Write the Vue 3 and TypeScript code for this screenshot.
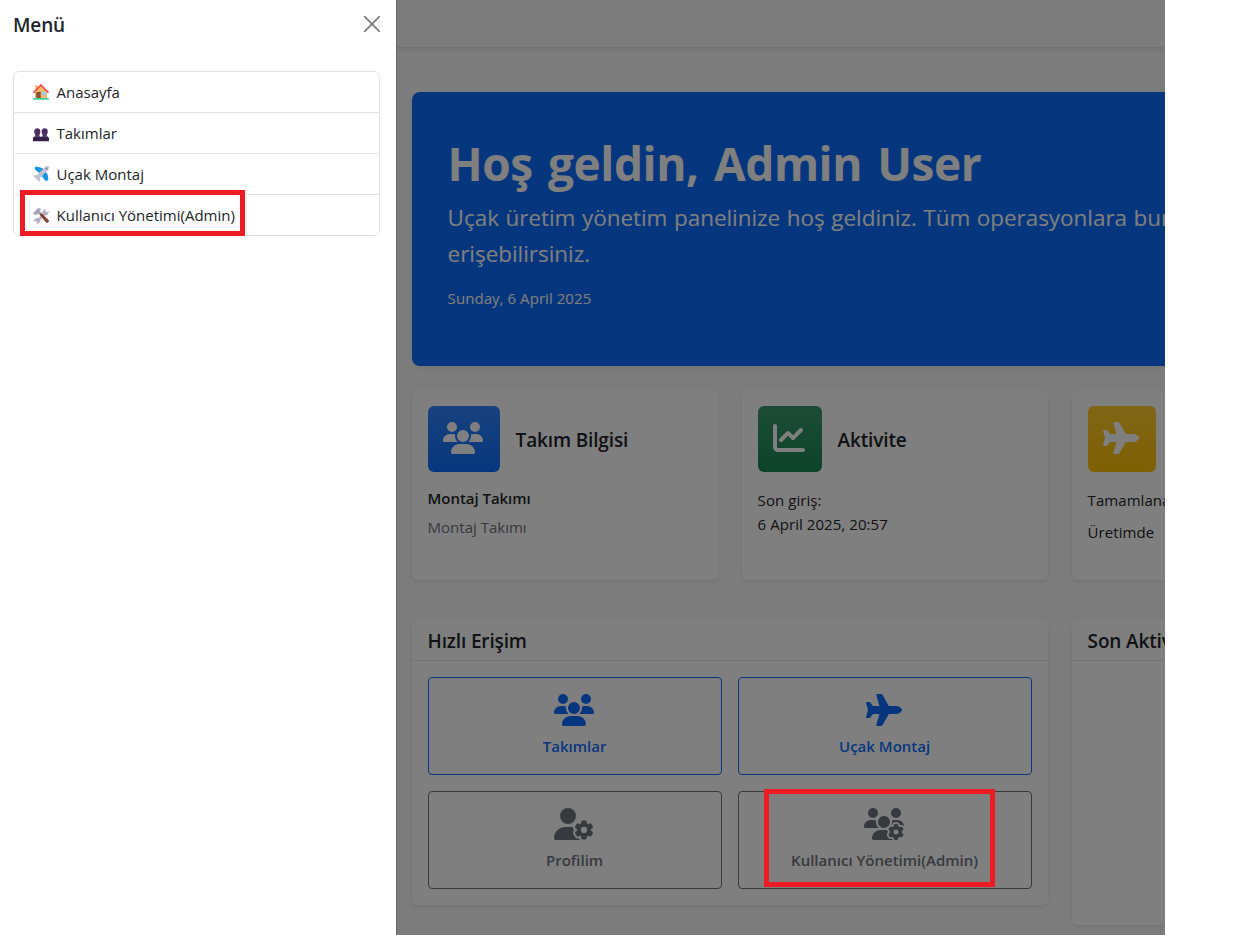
<script setup lang="ts">
type IconName = 'users' | 'chart' | 'plane' | 'userGear' | 'usersGear'

const icons: Record<IconName, { width: number; path: string }> = {
  users: {
    width: 640,
    path: 'M144 0a80 80 0 1 1 0 160A80 80 0 1 1 144 0zM512 0a80 80 0 1 1 0 160A80 80 0 1 1 512 0zM0 298.7C0 239.8 47.8 192 106.7 192h42.7c15.9 0 31 3.5 44.6 9.7c-1.3 7.2-1.9 14.7-1.9 22.3c0 38.2 16.8 72.5 43.3 96c-.2 0-.4 0-.7 0H21.3C9.6 320 0 310.4 0 298.7zM405.3 320c-.2 0-.4 0-.7 0c26.6-23.5 43.3-57.8 43.3-96c0-7.6-.7-15-1.9-22.3c13.6-6.3 28.7-9.7 44.6-9.7h42.7C592.2 192 640 239.8 640 298.7c0 11.8-9.6 21.3-21.3 21.3H405.3zM224 224a96 96 0 1 1 192 0 96 96 0 1 1 -192 0zM128 485.3C128 411.7 187.7 352 261.3 352H378.7C452.3 352 512 411.7 512 485.3c0 14.7-11.9 26.7-26.7 26.7H154.7c-14.7 0-26.7-11.9-26.7-26.7z',
  },
  chart: {
    width: 512,
    path: 'M64 64c0-17.7-14.3-32-32-32S0 46.3 0 64V400c0 44.2 35.8 80 80 80H480c17.7 0 32-14.3 32-32s-14.3-32-32-32H80c-8.8 0-16-7.2-16-16V64zm406.6 86.6c12.5-12.5 12.5-32.8 0-45.3s-32.8-12.5-45.3 0L320 210.7l-57.4-57.4c-12.5-12.5-32.8-12.5-45.3 0l-112 112c-12.5 12.5-12.5 32.8 0 45.3s32.8 12.5 45.3 0L240 221.3l57.4 57.4c12.5 12.5 32.8 12.5 45.3 0l128-128z',
  },
  plane: {
    width: 576,
    path: 'M482.3 192c34.2 0 93.7 29 93.7 64c0 36-59.5 64-93.7 64l-116.6 0L265.2 495.9c-5.7 10-16.3 16.1-27.8 16.1l-56.2 0c-10.6 0-18.3-10.2-15.4-20.4l49-171.6L112 320 68.8 377.6c-3 4-7.8 6.4-12.8 6.4l-42 0c-7.8 0-14-6.3-14-14c0-1.3 .2-2.6 .5-3.9L32 256 .5 145.9c-.4-1.3-.5-2.6-.5-3.9c0-7.8 6.3-14 14-14l42 0c5 0 9.8 2.4 12.8 6.4L112 192l102.9 0-49-171.6C162.9 10.2 170.6 0 181.2 0l56.2 0c11.5 0 22.1 6.2 27.8 16.1L365.7 192l116.6 0z',
  },
  userGear: {
    width: 640,
    path: 'M224 0a128 128 0 1 1 0 256A128 128 0 1 1 224 0zM178.3 304h91.4c11.8 0 23.4 1.2 34.5 3.3c-2.1 18.5 7.4 35.6 21.8 44.8c-16.6 10.6-26.7 31.6-20 53.3c4 12.9 9.4 25.5 16.4 37.6s15.2 23.1 24.4 33c15.7 16.9 39.6 18.4 57.2 8.7v.9c0 9.2 2.7 18.5 7.9 26.3H29.7C13.3 512 0 498.7 0 482.3C0 383.8 79.8 304 178.3 304zM436 218.2c0-7 4.5-13.3 11.3-14.8c10.5-2.4 21.5-3.7 32.7-3.7s22.2 1.3 32.7 3.7c6.8 1.5 11.3 7.8 11.3 14.8v30.6c7.9 3.4 15.4 7.7 22.3 12.8l24.9-14.3c6.1-3.5 13.7-2.7 18.5 2.4c7.6 8.1 14.3 17.2 20.1 27.2s10.3 20.4 13.5 31c2.1 6.7-1.1 13.7-7.2 17.2l-25 14.4c.4 4 .7 8.1 .7 12.3s-.2 8.2-.7 12.3l25 14.4c6.1 3.5 9.2 10.5 7.2 17.2c-3.3 10.6-7.8 21-13.5 31s-12.5 19.1-20.1 27.2c-4.8 5.1-12.5 5.9-18.5 2.4l-24.9-14.3c-6.9 5.1-14.3 9.4-22.3 12.8l0 30.6c0 7-4.5 13.3-11.3 14.8c-10.5 2.4-21.5 3.7-32.7 3.7s-22.2-1.3-32.7-3.7c-6.8-1.5-11.3-7.8-11.3-14.8V454.8c-8-3.4-15.6-7.7-22.5-12.9l-24.7 14.3c-6.1 3.5-13.7 2.7-18.5-2.4c-7.6-8.1-14.3-17.2-20.1-27.2s-10.3-20.4-13.5-31c-2.1-6.7 1.1-13.7 7.2-17.2l24.8-14.3c-.4-4.1-.7-8.2-.7-12.4s.2-8.3 .7-12.4L343.8 325c-6.1-3.5-9.2-10.5-7.2-17.2c3.3-10.6 7.7-21 13.5-31s12.5-19.1 20.1-27.2c4.8-5.1 12.4-5.9 18.5-2.4l24.8 14.3c6.9-5.1 14.5-9.4 22.5-12.9V218.2zm92.1 133.5a48.1 48.1 0 1 0 -96.1 0 48.1 48.1 0 1 0 96.1 0z',
  },
  usersGear: {
    width: 640,
    path: 'M144 160A80 80 0 1 0 144 0a80 80 0 1 0 0 160zm368 0A80 80 0 1 0 512 0a80 80 0 1 0 0 160zM0 298.7C0 310.4 9.6 320 21.3 320H234.7c.2 0 .4 0 .7 0c-26.6-23.5-43.3-57.8-43.3-96c0-7.6 .7-15 1.9-22.3c-13.6-6.3-28.7-9.7-44.6-9.7H106.7C47.8 192 0 239.8 0 298.7zM320 320c24 0 45.9-8.8 62.7-23.3c2.5-3.7 5.2-7.3 8-10.7c2.7-3.3 5.7-6.1 9-8.3C410 262.3 416 243.9 416 224c0-53-43-96-96-96s-96 43-96 96s43 96 96 96zm65.4 60.2c-10.3-5.9-18.1-16.2-20.8-28.2H261.3C187.7 352 128 411.7 128 485.3c0 14.7 11.9 26.7 26.7 26.7H455.2c-2.1-5.2-3.2-10.9-3.2-16.4v-3c-1.3-.7-2.7-1.5-4-2.3l-2.6 1.5c-16.8 9.7-40.5 8-54.7-9.7c-4.5-5.6-8.6-11.5-12.4-17.6l-.1-.2-.1-.2-2.4-4.1-.1-.2-.1-.2c-3.4-6.2-6.4-12.6-9-19.3c-8.2-21.2 2.2-42.6 19-52.3l2.7-1.5c0-.8 0-1.5 0-2.3s0-1.5 0-2.3l-2.7-1.5zM533.3 192H490.7c-15.9 0-31 3.5-44.6 9.7c1.3 7.2 1.9 14.7 1.9 22.3c0 17.4-3.5 33.9-9.7 49c2.5 .9 4.9 2 7.1 3.3l2.6 1.5c1.3-.8 2.6-1.6 4-2.3v-3c0-19.4 13.3-39.1 35.8-42.6c7.9-1.2 16-1.9 24.2-1.9s16.3 .6 24.2 1.9c22.5 3.5 35.8 23.2 35.8 42.6v3c1.3 .7 2.7 1.5 4 2.3l2.6-1.5c16.8-9.7 40.5-8 54.7 9.7c2.3 2.8 4.5 5.8 6.6 8.7c-2.1-57.1-49-102.7-106.6-102.7zm91.3 163.9c6.3-3.6 9.5-11.1 6.8-18c-2.1-5.5-4.6-10.8-7.4-15.9l-2.3-4c-3.1-5.1-6.5-9.9-10.2-14.5c-4.6-5.7-12.7-6.7-19-3l-2.9 1.7c-9.2 5.3-20.4 4-29.6-1.3s-16.1-14.5-16.1-25.1v-3.4c0-7.3-4.9-13.8-12.1-14.9c-6.5-1-13.1-1.5-19.9-1.5s-13.4 .5-19.9 1.5c-7.2 1.1-12.1 7.6-12.1 14.9v3.4c0 10.6-6.9 19.8-16.1 25.1s-20.4 6.6-29.6 1.3l-2.9-1.7c-6.3-3.6-14.4-2.6-19 3c-3.7 4.6-7.1 9.5-10.2 14.6l-2.3 3.9c-2.8 5.1-5.3 10.4-7.4 15.9c-2.6 6.8 .5 14.3 6.8 17.9l2.9 1.7c9.2 5.3 13.7 15.8 13.7 26.4s-4.5 21.1-13.7 26.4l-3 1.7c-6.3 3.6-9.5 11.1-6.8 17.9c2.1 5.5 4.6 10.7 7.4 15.8l2.4 4.1c3 5.1 6.4 9.9 10.1 14.5c4.6 5.7 12.7 6.7 19 3l2.9-1.7c9.2-5.3 20.4-4 29.6 1.3s16.1 14.5 16.1 25.1v3.4c0 7.3 4.9 13.8 12.1 14.9c6.5 1 13.1 1.5 19.9 1.5s13.4-.5 19.9-1.5c7.2-1.1 12.1-7.6 12.1-14.9v-3.4c0-10.6 6.9-19.8 16.1-25.1s20.4-6.6 29.6-1.3l2.9 1.7c6.3 3.6 14.4 2.6 19-3c3.7-4.6 7.1-9.4 10.1-14.5l2.4-4.2c2.8-5.1 5.3-10.3 7.4-15.8c2.6-6.8-.5-14.3-6.8-17.9l-3-1.7c-9.2-5.3-13.7-15.8-13.7-26.4s4.5-21.1 13.7-26.4l3-1.7zM472 384a40 40 0 1 1 80 0 40 40 0 1 1 -80 0z',
  },
}

const menu = [
  { key: 'home', label: 'Anasayfa' },
  { key: 'teams', label: 'Takımlar' },
  { key: 'assembly', label: 'Uçak Montaj' },
  { key: 'admin', label: 'Kullanıcı Yönetimi(Admin)' },
]

const shortcuts: { icon: IconName; label: string; tone: string; key: string }[] = [
  { icon: 'users', label: 'Takımlar', tone: 'primary', key: 'teams' },
  { icon: 'plane', label: 'Uçak Montaj', tone: 'primary', key: 'assembly' },
  { icon: 'userGear', label: 'Profilim', tone: 'secondary', key: 'profile' },
  { icon: 'usersGear', label: 'Kullanıcı Yönetimi(Admin)', tone: 'secondary', key: 'admin' },
]
</script>

<template>
  <div class="screen">
    <aside class="drawer">
      <header class="drawer-head">
        <h5 class="drawer-title">Menü</h5>
        <svg class="close" viewBox="0 0 16 16" aria-label="Kapat">
          <path d="M.7.7l14.6 14.6M15.3.7L.7 15.3" fill="none" stroke="currentColor" stroke-width="1.9" stroke-linecap="round" />
        </svg>
      </header>
      <nav class="menu">
        <a v-for="item in menu" :key="item.key" class="menu-item">
          <svg v-if="item.key === 'home'" class="emoji home" viewBox="0 0 16 16">
            <path d="M2.200 1.200h2.600v5H2.200z" fill="#f3b566" />
            <path d="M2 7.500 8 1.500l6 6V14.500H2z" fill="#f3b566" />
            <path d="M.9 8.300 8 1l7.100 7.300" fill="none" stroke="#ee4040" stroke-width="1.500" stroke-linecap="round" />
            <rect x="3.300" y="8" width="4.400" height="6.300" fill="#8a5140" />
            <rect x="9.200" y="7.800" width="3.700" height="3.300" fill="#8cd3fb" />
            <rect x="0" y="14" width="16" height="1.700" rx=".6" fill="#3ccf95" />
          </svg>
          <svg v-else-if="item.key === 'teams'" class="emoji" viewBox="0 0 16 16">
            <g fill="#4b2f63">
              <path d="M1.200 5.700C1.200 3.300 2.500 2.300 4.300 2.300S7.400 3.300 7.400 5.700c0 1.300-.4 2.300-1 3.100v1.500H2.200V8.800c-.6-.8-1-1.800-1-3.100z" />
              <path d="M8.600 5.700c0-2.400 1.300-3.400 3.100-3.400s3.100 1 3.100 3.400c0 1.300-.4 2.300-1 3.100v1.500H9.600V8.800c-.6-.8-1-1.800-1-3.100z" />
            </g>
            <path d="M0 15.300v-2.600c0-1.600 1-2.500 2.400-2.500h3.800c.8 0 1.400.3 1.800.8.4-.5 1-.8 1.800-.8h3.800c1.400 0 2.400.9 2.400 2.500v2.600z" fill="#35204a" />
          </svg>
          <svg v-else-if="item.key === 'assembly'" class="emoji plane" viewBox="0 0 16 16">
            <path d="M11 5 9.500 2 3.200.4 1.800 1.300 2 3.700 7.200 7.800zM11.200 5.200l3.200 2.300 1 6-1.200 1.400-2-.3-4.300-5.300z" fill="#1597e5" />
            <path d="M15.600.4c-1-.8-2.600-.2-3.600.8L3.600 9.300.6 9.200 0 10.300l3 1.700-.6 1.200.6.5 1.200-.6L6 15.800l1-.6-.1-3L14.900 4c1-1 1.600-2.700.7-3.600z" fill="#c3bfd3" />
            <path d="M12.700 1.700 14.500 3.400" stroke="#4b6a9a" stroke-width="1" />
          </svg>
          <svg v-else class="emoji" viewBox="0 0 16 16">
            <path d="M13.300.9a3.800 3.800 0 0 0-3.600 5L5.300 10.300A3.600 3.600 0 0 0 .6 13.500l2.200-.5 1.300 1.300-.6 1.400a3.700 3.700 0 0 0 3.900-4.300L11.900 7.500a4 4 0 0 0 4.100-4.200l-2.300 1.100-1.600-1.500z" fill="#b5adc8" />
            <path d="M6.400 6.400 8.200 4.700l7.300 7.300c1.300 1.500-.8 3.900-2.500 2.400z" fill="#7d4533" />
            <path d="M0 5.400 4.300.8C5.600 0 7.300.4 8.400 1.300L6.500 2.600 8.300 4.700 6.300 6.700 4.300 5.400 2 7.600z" fill="#a79fbd" />
          </svg>
          <span>{{ item.label }}</span>
        </a>
        <div class="mark mark-menu"></div>
      </nav>
    </aside>

    <main class="page">
      <div class="navbar"></div>
      <div class="content">
        <section class="hero">
          <h1>Hoş geldin, Admin User</h1>
          <p class="lead">Uçak üretim yönetim panelinize hoş geldiniz. Tüm operasyonlara buradan<br />erişebilirsiniz.</p>
          <p class="date">Sunday, 6 April 2025</p>
        </section>

        <section class="stats">
          <article class="card stat">
            <div class="stat-head">
              <span class="tile blue"><svg viewBox="0 0 640 512"><path :d="icons.users.path" /></svg></span>
              <h5>Takım Bilgisi</h5>
            </div>
            <p class="team">Montaj Takımı</p>
            <p class="team-note">Montaj Takımı</p>
          </article>
          <article class="card stat">
            <div class="stat-head">
              <span class="tile green"><svg viewBox="0 0 512 512"><path :d="icons.chart.path" /></svg></span>
              <h5>Aktivite</h5>
            </div>
            <p class="line">Son giriş:<br />6 April 2025, 20:57</p>
          </article>
          <article class="card stat">
            <div class="stat-head">
              <span class="tile yellow"><svg viewBox="0 0 576 512"><path :d="icons.plane.path" /></svg></span>
            </div>
            <p class="line">Tamamlanan</p>
            <p class="line second">Üretimde</p>
          </article>
        </section>

        <section class="panels">
          <article class="card">
            <header class="card-head"><h5>Hızlı Erişim</h5></header>
            <div class="shortcuts">
              <a v-for="s in shortcuts" :key="s.key" class="shortcut" :class="s.tone">
                <svg :viewBox="`0 0 ${icons[s.icon].width} 512`"><path :d="icons[s.icon].path" /></svg>
                <span>{{ s.label }}</span>
                <div v-if="s.key === 'admin'" class="mark mark-shortcut"></div>
              </a>
            </div>
          </article>
          <article class="card recent">
            <header class="card-head"><h5>Son Aktiviteler</h5></header>
          </article>
        </section>
      </div>
      <div class="backdrop"></div>
    </main>
  </div>
</template>

<style>
body {
  margin: 0;
  background: #fff;
}
</style>

<style scoped>
* {
  box-sizing: border-box;
}
.screen {
  display: flex;
  width: 1165px;
  height: 935px;
  overflow: hidden;
  font-family: 'Open Sans', 'Noto Sans', sans-serif;
  font-size: 15px;
  line-height: 24px;
  color: #212529;
}
h1,
h5,
p {
  margin: 0;
}
h5 {
  font-size: 19px;
  line-height: 24px;
  font-weight: 600;
  letter-spacing: -0.15px;
  white-space: nowrap;
}
.drawer {
  flex: none;
  width: 397px;
  padding: 12px 16px 0 13px;
  background: #fff;
  border-right: 1px solid #666;
}
.drawer-head {
  display: flex;
  justify-content: space-between;
  height: 59px;
}
.drawer-title {
  padding-top: 1px;
}
.close {
  width: 16px;
  height: 16px;
  margin-top: 4px;
  color: #7f7f7f;
}
.menu {
  position: relative;
  width: 367px;
  height: 165px;
  border: 1px solid #dee2e6;
  border-radius: 6px;
}
.menu-item {
  display: flex;
  align-items: center;
  height: 41px;
  padding-left: 19px;
  gap: 7.5px;
  border-bottom: 1px solid #dee2e6;
}
.menu-item:nth-child(4) {
  border-bottom-color: transparent;
}
.emoji {
  width: 16px;
  height: 16px;
  margin-top: 2px;
}
.home,
.plane {
  margin-top: 0;
}
.mark {
  position: absolute;
  z-index: 3;
  border: 5px solid #ed1c24;
}
.mark-menu {
  left: 6px;
  top: 118px;
  width: 225px;
  height: 46px;
}
.mark-shortcut {
  left: 25px;
  top: -3px;
  width: 231px;
  height: 98px;
}
.page {
  position: relative;
  flex: none;
  width: 768px;
  height: 935px;
  overflow: hidden;
  background: #f8f9fa;
}
.navbar {
  height: 48px;
  border-bottom: 1px solid #dee2e6;
  box-shadow: 0 2px 4px rgba(0, 0, 0, 0.075);
}
.backdrop {
  position: absolute;
  inset: 0;
  z-index: 2;
  background: rgba(0, 0, 0, 0.5);
}
.content {
  width: 1296px;
  padding: 44px 0 0 14.6px;
}
.hero {
  height: 274px;
  padding: 42px 36px;
  border-radius: 8px;
  background: #0d6efd;
  color: #fff;
  box-shadow: 0 2px 4px rgba(0, 0, 0, 0.075);
}
.hero h1 {
  font-size: 46px;
  line-height: 58px;
  font-weight: 700;
  letter-spacing: -0.45px;
  word-spacing: 3.8px;
}
.lead {
  margin-top: 8px;
  font-size: 22.5px;
  line-height: 36px;
  letter-spacing: -0.05px;
  word-spacing: 0.8px;
}
.date {
  margin-top: 14px;
  letter-spacing: 0.06px;
}
.stats {
  display: grid;
  grid-template-columns: repeat(3, 306px);
  gap: 24px;
  margin-top: 24px;
}
.card {
  border-radius: 6px;
  background: #fff;
  box-shadow: 0 2px 4px rgba(0, 0, 0, 0.075);
}
.stat {
  height: 190px;
  padding: 16px;
}
.stat-head {
  display: flex;
  align-items: center;
  gap: 16px;
  height: 66px;
}
.stat-head h5 {
  padding-top: 2px;
}
.tile {
  height: 66px;
  padding: 16px;
  border-radius: 6px;
  color: #fff;
}
.tile svg,
.shortcut svg {
  display: block;
  height: 32px;
  margin: 0 0.3px 0 -0.3px;
  fill: currentColor;
}
.blue {
  background: linear-gradient(180deg, rgba(255, 255, 255, 0.15), rgba(255, 255, 255, 0)) #0d6efd;
}
.green {
  background: linear-gradient(180deg, rgba(255, 255, 255, 0.15), rgba(255, 255, 255, 0)) #198754;
}
.yellow {
  background: linear-gradient(180deg, rgba(255, 255, 255, 0.15), rgba(255, 255, 255, 0)) #ffc107;
}
.team {
  margin-top: 14px;
  font-weight: 600;
  letter-spacing: -0.05px;
}
.team-note {
  margin-top: 5px;
  color: #6c757d;
}
.line {
  margin-top: 16px;
  letter-spacing: 0.06px;
}
.second {
  margin-top: 8px;
}
.panels {
  display: grid;
  grid-template-columns: 636px 306px;
  gap: 24px;
  align-items: start;
  margin-top: 40px;
}
.card-head {
  height: 41px;
  padding: 9px 16px 0;
  border-bottom: 1px solid #ebebeb;
}
.recent {
  height: 305px;
}
.shortcuts {
  display: grid;
  grid-template-columns: 294px 294px;
  gap: 16px;
  padding: 16px;
}
.shortcut {
  position: relative;
  display: flex;
  flex-direction: column;
  align-items: center;
  gap: 8px;
  height: 98px;
  padding-top: 16px;
  border: 1px solid currentColor;
  border-radius: 4px;
  font-weight: 600;
}
.primary {
  color: #0d6efd;
}
.secondary {
  color: #6c757d;
}
</style>
